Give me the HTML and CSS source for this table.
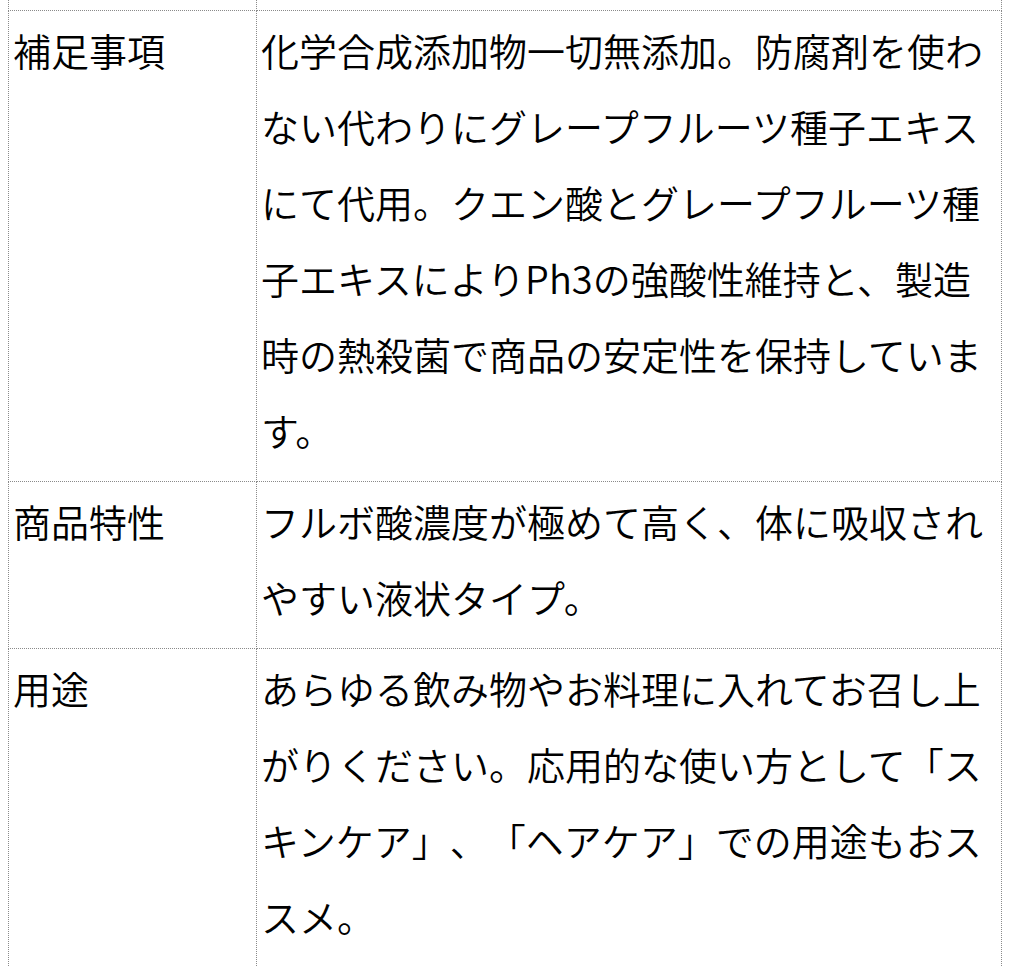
FILE: index.html
```html
<!DOCTYPE html>
<html lang="ja">
<head>
<meta charset="utf-8">
<title>商品情報</title>
<link rel="stylesheet" href="styles.css">
</head>
<body>
<table class="spec">
  <colgroup>
    <col class="col-label">
    <col class="col-value">
  </colgroup>
  <tbody>
    <tr class="spacer">
      <td></td>
      <td></td>
    </tr>
    <tr>
      <th>補足事項</th>
      <td>化学合成添加物一切無添加。防腐剤を使わない代わりにグレープフルーツ種子エキスにて代用。クエン酸とグレープフルーツ種子エキスによりPh3の強酸性維持と、製造時の熱殺菌で商品の安定性を保持しています。</td>
    </tr>
    <tr>
      <th>商品特性</th>
      <td>フルボ酸濃度が極めて高く、体に吸収されやすい液状タイプ。</td>
    </tr>
    <tr>
      <th>用途</th>
      <td>あらゆる飲み物やお料理に入れてお召し上がりください。応用的な使い方として「スキンケア」、「ヘアケア」での用途もおススメ。</td>
    </tr>
  </tbody>
</table>
</body>
</html>
```
FILE: styles.css
```css
html, body {
  background: #ffffff;
}

body {
  margin: 0 8px;
  font-family: "Noto Sans CJK JP", "Noto Sans", sans-serif;
  color: #000000;
}

.spec {
  border-collapse: collapse;
  width: 994px;
  table-layout: fixed;
}

.col-label {
  width: 248px;
}

.spec th,
.spec td {
  border: 1px dotted #8a8a8a;
  padding: 1px 4px 13px;
  font-size: 38px;
  line-height: 76px;
  font-weight: 350;
  text-align: left;
  vertical-align: top;
  text-spacing-trim: space-all;
  font-feature-settings: "palt" 0, "halt" 0;
}

.spec .spacer td {
  border-top: none;
  height: 10px;
  padding: 0;
  line-height: 0;
  font-size: 0;
}
```
